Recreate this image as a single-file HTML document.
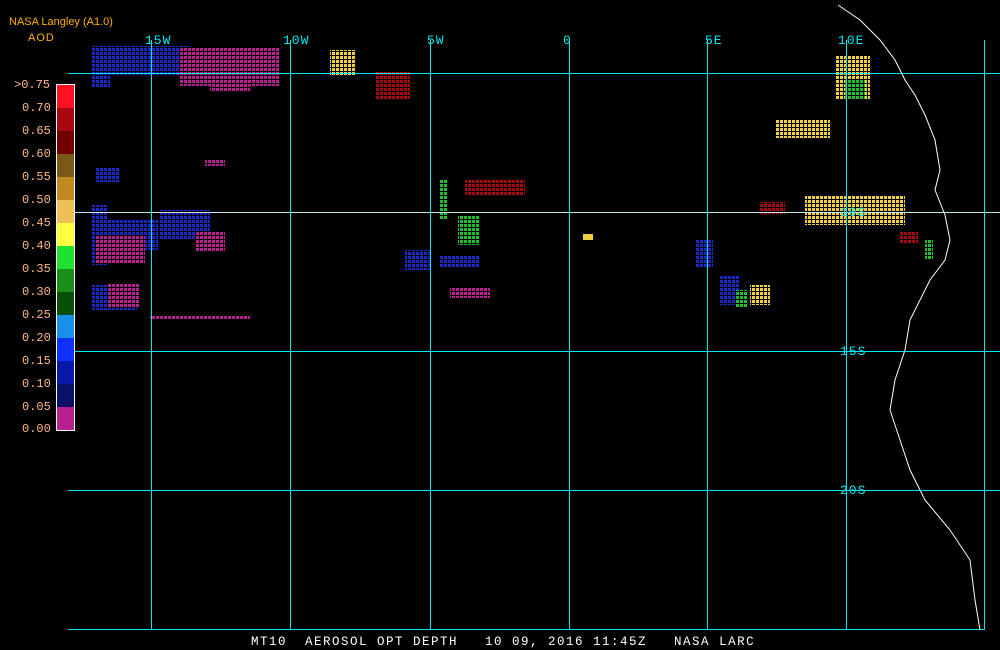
<!DOCTYPE html>
<html><head><style>
body{margin:0;background:#000;width:1000px;height:650px;overflow:hidden;font-family:"Liberation Mono","DejaVu Sans Mono",monospace}
.t{position:absolute;font-size:12px;white-space:pre;letter-spacing:1px}
.c{color:#00e8f0;font-size:13px}
.l{color:#ffb888;left:22px;font-size:12px;letter-spacing:0}
</style></head><body>
<svg width="1000" height="650" style="position:absolute;left:0;top:0" shape-rendering="crispEdges">
<defs>
<pattern id="sp" width="4" height="4" patternUnits="userSpaceOnUse"><rect width="3" height="3" fill="#fff"/></pattern>
<mask id="m"><rect width="1000" height="650" fill="url(#sp)"/></mask>
</defs>
<g mask="url(#m)">
<g fill="#1a28c8">
<rect x="92" y="46" width="60" height="30"/><rect x="92" y="76" width="18" height="12"/><rect x="95" y="168" width="25" height="14"/>
<rect x="92" y="205" width="15" height="60"/><rect x="108" y="220" width="50" height="30"/><rect x="160" y="210" width="50" height="30"/>
<rect x="92" y="285" width="45" height="25"/><rect x="150" y="46" width="40" height="30"/><rect x="405" y="250" width="25" height="20"/><rect x="440" y="255" width="40" height="12"/>
<rect x="695" y="240" width="18" height="28"/><rect x="720" y="275" width="20" height="30"/>
</g>
<g fill="#b82090">
<rect x="180" y="48" width="100" height="38"/><rect x="210" y="80" width="40" height="12"/><rect x="95" y="235" width="50" height="28"/>
<rect x="195" y="232" width="30" height="20"/><rect x="108" y="283" width="32" height="25"/><rect x="150" y="315" width="100" height="4"/>
<rect x="450" y="288" width="40" height="10"/><rect x="205" y="160" width="20" height="6"/>
</g>
<g fill="#a80810">
<rect x="465" y="180" width="60" height="16"/><rect x="375" y="72" width="35" height="28"/><rect x="760" y="202" width="25" height="12"/><rect x="900" y="232" width="18" height="12"/>
</g>
<g fill="#f0d040">
<rect x="835" y="55" width="35" height="45"/><rect x="805" y="195" width="100" height="30"/><rect x="775" y="120" width="55" height="18"/><rect x="330" y="50" width="25" height="25"/><rect x="750" y="285" width="20" height="20"/>
</g>
<g fill="#20c030"><rect x="845" y="80" width="20" height="20"/><rect x="440" y="180" width="8" height="40"/><rect x="458" y="215" width="22" height="30"/><rect x="925" y="240" width="8" height="20"/><rect x="735" y="290" width="12" height="18"/></g>
</g>
<rect x="583" y="234" width="10" height="6" fill="#f0d040"/>
<g fill="#00e8f0">
<rect x="68" y="73" width="932" height="1"/><rect x="68" y="212" width="932" height="1" fill="#c0e8e8"/><rect x="68" y="351" width="932" height="1"/><rect x="68" y="490" width="932" height="1"/><rect x="68" y="629" width="917" height="1"/>
<rect x="151" y="40" width="1" height="590"/><rect x="290" y="40" width="1" height="590"/><rect x="430" y="40" width="1" height="590"/><rect x="569" y="40" width="1" height="590"/><rect x="707" y="40" width="1" height="590"/><rect x="846" y="40" width="1" height="590"/><rect x="984" y="40" width="1" height="590"/>
</g>
<polyline shape-rendering="auto" fill="none" stroke="#fff" stroke-width="1" points="838,5 860,20 880,40 895,60 905,80 915,95 925,115 935,140 940,170 935,190 945,215 950,240 945,260 930,280 920,300 910,320 905,350 895,380 890,410 900,440 910,470 925,500 950,530 970,560 975,600 980,630"/>
<rect x="56.5" y="84.5" width="18" height="346" fill="none" stroke="#fff"/>
<g>
<rect x="57" y="85" width="17" height="23" fill="#ff1020"/><rect x="57" y="108" width="17" height="23" fill="#a80810"/><rect x="57" y="131" width="17" height="23" fill="#700000"/>
<rect x="57" y="154" width="17" height="23" fill="#7a5818"/><rect x="57" y="177" width="17" height="23" fill="#c08a20"/><rect x="57" y="200" width="17" height="23" fill="#f0c058"/>
<rect x="57" y="223" width="17" height="23" fill="#ffff40"/><rect x="57" y="246" width="17" height="23" fill="#20e030"/><rect x="57" y="269" width="17" height="23" fill="#189018"/>
<rect x="57" y="292" width="17" height="23" fill="#085008"/><rect x="57" y="315" width="17" height="23" fill="#1890e8"/><rect x="57" y="338" width="17" height="23" fill="#1030ff"/>
<rect x="57" y="361" width="17" height="23" fill="#0818a8"/><rect x="57" y="384" width="17" height="23" fill="#081068"/><rect x="57" y="407" width="17" height="23" fill="#b82090"/>
</g>
</svg>
<div class="t" style="left:9px;top:16px;color:#ffb000;font-family:'Liberation Sans',sans-serif;font-size:11px;letter-spacing:0">NASA Langley (A1.0)</div>
<div class="t" style="left:28px;top:32px;color:#ffb000;font-family:'Liberation Sans',sans-serif;font-size:11px">AOD</div>
<div class="t l" style="top:78px;left:14px">&gt;0.75</div>
<div class="t l" style="top:101px">0.70</div><div class="t l" style="top:124px">0.65</div><div class="t l" style="top:147px">0.60</div>
<div class="t l" style="top:170px">0.55</div><div class="t l" style="top:193px">0.50</div><div class="t l" style="top:216px">0.45</div>
<div class="t l" style="top:239px">0.40</div><div class="t l" style="top:262px">0.35</div><div class="t l" style="top:285px">0.30</div>
<div class="t l" style="top:308px">0.25</div><div class="t l" style="top:331px">0.20</div><div class="t l" style="top:354px">0.15</div>
<div class="t l" style="top:377px">0.10</div><div class="t l" style="top:400px">0.05</div><div class="t l" style="top:422px">0.00</div>
<div class="t c" style="left:145px;top:33px">15W</div><div class="t c" style="left:283px;top:33px">10W</div><div class="t c" style="left:427px;top:33px">5W</div>
<div class="t c" style="left:563px;top:33px">0</div><div class="t c" style="left:705px;top:33px">5E</div><div class="t c" style="left:838px;top:33px">10E</div>
<div class="t c" style="left:840px;top:205px">10S</div><div class="t c" style="left:840px;top:344px">15S</div><div class="t c" style="left:840px;top:483px">20S</div>
<div class="t" style="left:251px;top:635px;color:#fff;font-size:12.5px;letter-spacing:1.5px">MT10  AEROSOL OPT DEPTH   10 09, 2016 11:45Z   NASA LARC</div>
</body></html>
